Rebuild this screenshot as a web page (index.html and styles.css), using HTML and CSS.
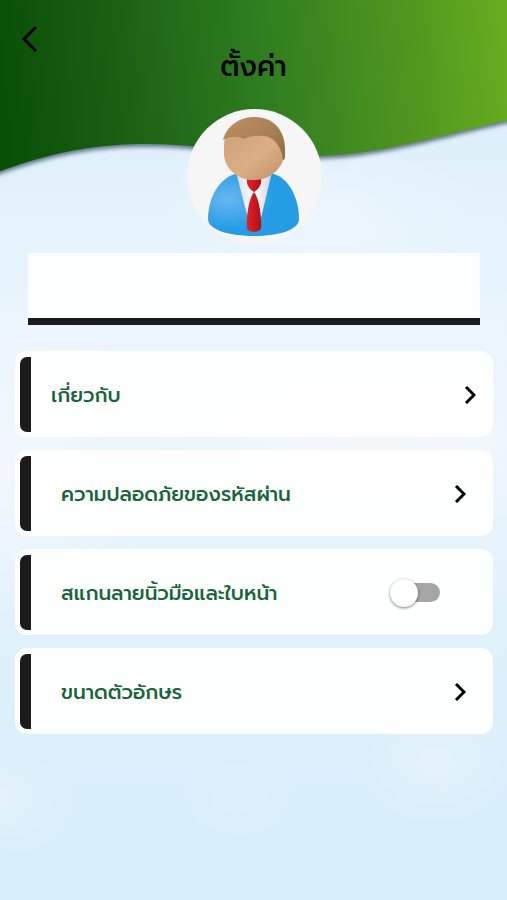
FILE: index.html
```html
<!DOCTYPE html>
<html lang="th">
<head>
<meta charset="utf-8">
<meta name="viewport" content="width=device-width, initial-scale=1">
<title>ตั้งค่า</title>
<link rel="stylesheet" href="styles.css">
</head>
<body>
<svg class="wave" viewBox="0 0 507 190" preserveAspectRatio="none" aria-hidden="true">
  <defs>
    <linearGradient id="leaf" gradientUnits="userSpaceOnUse" x1="0" y1="110" x2="507" y2="60">
      <stop offset="0" stop-color="#085006"/>
      <stop offset=".25" stop-color="#1b6114"/>
      <stop offset=".52" stop-color="#2f7d20"/>
      <stop offset=".8" stop-color="#4f951f"/>
      <stop offset="1" stop-color="#66ad20"/>
    </linearGradient>
    <filter id="soft" x="-5%" y="-5%" width="110%" height="115%"><feGaussianBlur stdDeviation="2"/></filter>
  </defs>
  <path d="M-10 -10V175C50 152 96 144 148 144C208 144 250 157 318 156C384 154 440 135 517 118V-10Z" fill="#384f60" opacity=".75" filter="url(#soft)" transform="translate(0 3)"/>
  <path d="M-10 -10V175C50 152 96 144 148 144C208 144 250 157 318 156C384 154 440 135 517 118V-10Z" fill="url(#leaf)"/>
</svg>
<header class="top">
  <button class="back" type="button" aria-label="กลับ">
    <svg width="18" height="28" viewBox="0 0 18 28"><path d="M15 2L3 14L15 26" fill="none" stroke="#000" stroke-width="3"/></svg>
  </button>
  <h1 class="title">ตั้งค่า</h1>
</header>
<main class="page">
  <svg class="avatar" viewBox="0 0 135 135" aria-hidden="true">
    <defs>
      <radialGradient id="coat" cx=".22" cy=".4" r=".5"><stop offset="0" stop-color="#68b7ef"/><stop offset="1" stop-color="#249ce6"/></radialGradient>
      <linearGradient id="skin" x1="0" y1="0" x2="1" y2="1"><stop offset="0" stop-color="#d0a078"/><stop offset=".55" stop-color="#dbae86"/><stop offset="1" stop-color="#c08f66"/></linearGradient>
      <linearGradient id="hair" x1="0" y1="0" x2="1" y2="1"><stop offset="0" stop-color="#bd8f60"/><stop offset=".5" stop-color="#ac8156"/><stop offset="1" stop-color="#916b43"/></linearGradient>
      <linearGradient id="tie" x1="0" y1="0" x2="1" y2="0"><stop offset="0" stop-color="#df2229"/><stop offset=".6" stop-color="#c9151e"/><stop offset="1" stop-color="#a91119"/></linearGradient>
      <linearGradient id="shirt" x1="0" y1="0" x2="1" y2="0"><stop offset="0" stop-color="#dcdce4"/><stop offset=".5" stop-color="#fff"/><stop offset="1" stop-color="#d3d3dc"/></linearGradient>
    </defs>
    <circle cx="67.500" cy="67.500" r="67.500" fill="#f6f6f6"/>
    <path d="M48 65C33 69 21 88 21 110C21 121 43 127 67 127C91 127 112 121 112 110C112 88 101 69 87 65Z" fill="url(#coat)"/>
    <path d="M49 63L62 113H73L85 63Z" fill="url(#shirt)"/>
    <path d="M60 70H74C75 76 71 81 67 83C63 81 59 76 60 70Z" fill="url(#tie)"/>
    <path d="M67 83C62 89 59 108 60 119C60 124 74 124 74 119C75 108 72 89 67 83Z" fill="url(#tie)"/>
    <path d="M38 29C42 24 50 22 67 22C86 22 97 27 97 48C94 61 82 71 67 71C49 71 36 58 37 42C37 37 37 33 38 29Z" fill="url(#skin)"/>
    <path d="M36 31C40 16 53 8 68 8C87 8 98 22 98 40V48C98 50 97 51 96 51C95 40 88 27 76 27C67 26 61 28 57 30C51 27 43 27 36 31Z" fill="url(#hair)"/>
  </svg>
  <input class="name" type="text" aria-label="ชื่อ" readonly>
  <nav class="list">
    <a class="card card-wide" href="#about">
      <span class="label">เกี่ยวกับ</span>
      <svg class="arrow" viewBox="0 0 12 18"><path d="M2 1L10 9L2 17" fill="none" stroke="#000" stroke-width="3"/></svg>
    </a>
    <a class="card" href="#password">
      <span class="label">ความปลอดภัยของรหัสผ่าน</span>
      <svg class="arrow" viewBox="0 0 12 18"><path d="M2 1L10 9L2 17" fill="none" stroke="#000" stroke-width="3"/></svg>
    </a>
    <label class="card card-switch">
      <span class="label">สแกนลายนิ้วมือและใบหน้า</span>
      <input class="switch" type="checkbox" role="switch">
    </label>
    <a class="card" href="#font-size">
      <span class="label">ขนาดตัวอักษร</span>
      <svg class="arrow" viewBox="0 0 12 18"><path d="M2 1L10 9L2 17" fill="none" stroke="#000" stroke-width="3"/></svg>
    </a>
  </nav>
</main>
</body>
</html>
```
FILE: styles.css
```css
* { box-sizing: border-box; }

body {
  margin: 0;
  min-height: 100vh;
  position: relative;
  font-family: Prompt, Kanit, "Noto Sans Thai", "Noto Sans", sans-serif;
  background:
    radial-gradient(ellipse 80px 60px at 86% 765px, rgba(240, 246, 253, .5), transparent),
    radial-gradient(ellipse 80px 60px at 0% 800px, rgba(240, 246, 253, .5), transparent),
    radial-gradient(ellipse 60px 45px at 47% 795px, rgba(240, 246, 253, .3), transparent),
    radial-gradient(ellipse 170px 80px at 62% 215px, rgba(245, 249, 254, .5), transparent),
    radial-gradient(ellipse 180px 160px at 0% 460px, rgba(248, 250, 254, .6), transparent),
    radial-gradient(ellipse 260px 90px at 75% 440px, rgba(248, 249, 252, .7), transparent),
    linear-gradient(#deeffb 120px, #e5f3fc 230px, #ebf5fd 340px, #e9f4fc 500px, #dff1fb 640px, #d8eefa 800px, #d6eefa);
}

.wave {
  position: absolute;
  top: 0;
  left: 0;
  width: 100%;
  height: 190px;
}

.top {
  position: relative;
  display: grid;
  grid-template-columns: 60px 1fr 60px;
  height: 109px;
}

.back {
  align-self: start;
  height: 78px;
  padding: 0;
  border: 0;
  background: none;
}

.back svg { display: block; margin: 0 auto; }

.title {
  align-self: end;
  margin: 0 0 20px;
  text-align: center;
  font-size: 28px;
  line-height: 44px;
  font-weight: 500;
  color: #000;
}

.page {
  position: relative;
  display: flex;
  flex-direction: column;
  padding: 0 14px 24px 15px;
}

.avatar {
  align-self: center;
  width: 135px;
  height: 135px;
}

.name {
  height: 72px;
  margin: 9px 13px 26px;
  padding: 0 16px;
  border: 0;
  border-bottom: 7px solid #1c1b1c;
  background: rgba(255, 255, 255, .9);
  font: inherit;
  font-size: 20px;
}

.list {
  display: flex;
  flex-direction: column;
  gap: 13px;
}

.card {
  display: flex;
  align-items: center;
  justify-content: space-between;
  height: 86px;
  padding: 6px 27px 5px 5px;
  border-radius: 12px;
  background: rgba(255, 255, 255, .95);
  color: #17653b;
  text-decoration: none;
}

.card::before {
  content: "";
  align-self: stretch;
  width: 11px;
  border-radius: 7px 0 0 7px;
  background: #1c1b1c;
}

.label {
  flex: 1;
  padding-left: 30px;
  font-size: 20px;
  font-weight: 500;
  line-height: 32px;
}

.card-wide { padding-right: 17px; }
.card-wide .label { padding-left: 20px; }
.card-switch { padding-right: 53px; }

.arrow { width: 12px; height: 18px; }

.switch {
  appearance: none;
  display: flex;
  align-items: center;
  width: 44px;
  height: 19px;
  margin: 0;
  border-radius: 10px;
  background: #a5a5a5;
}

.switch::before {
  content: "";
  width: 28px;
  height: 28px;
  margin-left: -6px;
  flex: none;
  border-radius: 50%;
  background: #fff;
  box-shadow: 0 1px 3px rgba(0, 0, 0, .5);
}

.switch:checked { justify-content: flex-end; }
```
